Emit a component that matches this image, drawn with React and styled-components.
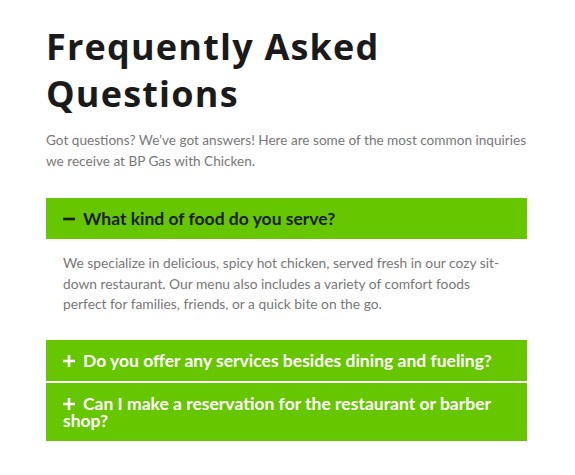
import React, { useState } from "react";
import styled, { createGlobalStyle } from "styled-components";

const GlobalStyle = createGlobalStyle`
  html, body {
    margin: 0;
    padding: 0;
    background: #ffffff;
  }
  * {
    box-sizing: border-box;
  }
`;

const Page = styled.section`
  width: 481px;
  margin-left: 46px;
  padding-top: 23px;
  font-family: "Lato", "Open Sans", sans-serif;
`;

const Title = styled.h1`
  margin: 0;
  font-family: "Open Sans", sans-serif;
  font-weight: 700;
  font-size: 36px;
  line-height: 47px;
  color: #1a1a1a;
  letter-spacing: 1.2px;
`;

const Intro = styled.p`
  margin: 13px 0 0;
  font-size: 13.6px;
  line-height: 21px;
  color: #777777;
`;

const List = styled.div`
  margin-top: 26px;
  display: flex;
  flex-direction: column;
  gap: 2px;
`;

const Header = styled.button`
  display: flex;
  align-items: flex-start;
  width: 100%;
  border: none;
  background: #66c600;
  padding: 12px 17px;
  text-align: left;
  cursor: pointer;
  font-family: "Lato", sans-serif;
  font-weight: 700;
  font-size: 17.5px;
  line-height: 17px;
  color: ${({ open }) => (open ? "#1c1c1c" : "#ffffff")};
`;

const Sign = styled.svg`
  width: 12px;
  height: 12px;
  margin-right: 8px;
  vertical-align: 0px;
`;

const Body = styled.div`
  padding: 14px 17px 23px;
  font-size: 13.8px;
  line-height: 20.5px;
  color: #777777;
`;

const items = [
  {
    q: "What kind of food do you serve?",
    a: "We specialize in delicious, spicy hot chicken, served fresh in our cozy sit-down restaurant. Our menu also includes a variety of comfort foods perfect for families, friends, or a quick bite on the go.",
  },
  {
    q: "Do you offer any services besides dining and fueling?",
    a: "Yes! We also have a barber shop on site.",
  },
  {
    q: "Can I make a reservation for the restaurant or barber shop?",
    a: "Please give us a call to check availability.",
  },
];

function Item({ item, open, onToggle }) {
  return (
    <div>
      <Header open={open} onClick={onToggle}>
        <span>
          <Sign viewBox="0 0 12 12">
            <path
              d={open ? "M0 6H12" : "M0 6H12M6 0V12"}
              stroke="currentColor"
              strokeWidth="2.6"
            />
          </Sign>
          {item.q}
        </span>
      </Header>
      {open ? <Body>{item.a}</Body> : null}
    </div>
  );
}

export default function App() {
  const [openIndex, setOpenIndex] = useState(0);
  return (
    <>
      <GlobalStyle />
      <Page>
        <Title>
          Frequently Asked
          <br />
          Questions
        </Title>
        <Intro>
          Got questions? We’ve got answers! Here are some of the most common
          inquiries we receive at BP Gas with Chicken.
        </Intro>
        <List>
          {items.map((item, index) => (
            <Item
              key={index}
              item={item}
              open={openIndex === index}
              onToggle={() => setOpenIndex(openIndex === index ? -1 : index)}
            />
          ))}
        </List>
      </Page>
    </>
  );
}
